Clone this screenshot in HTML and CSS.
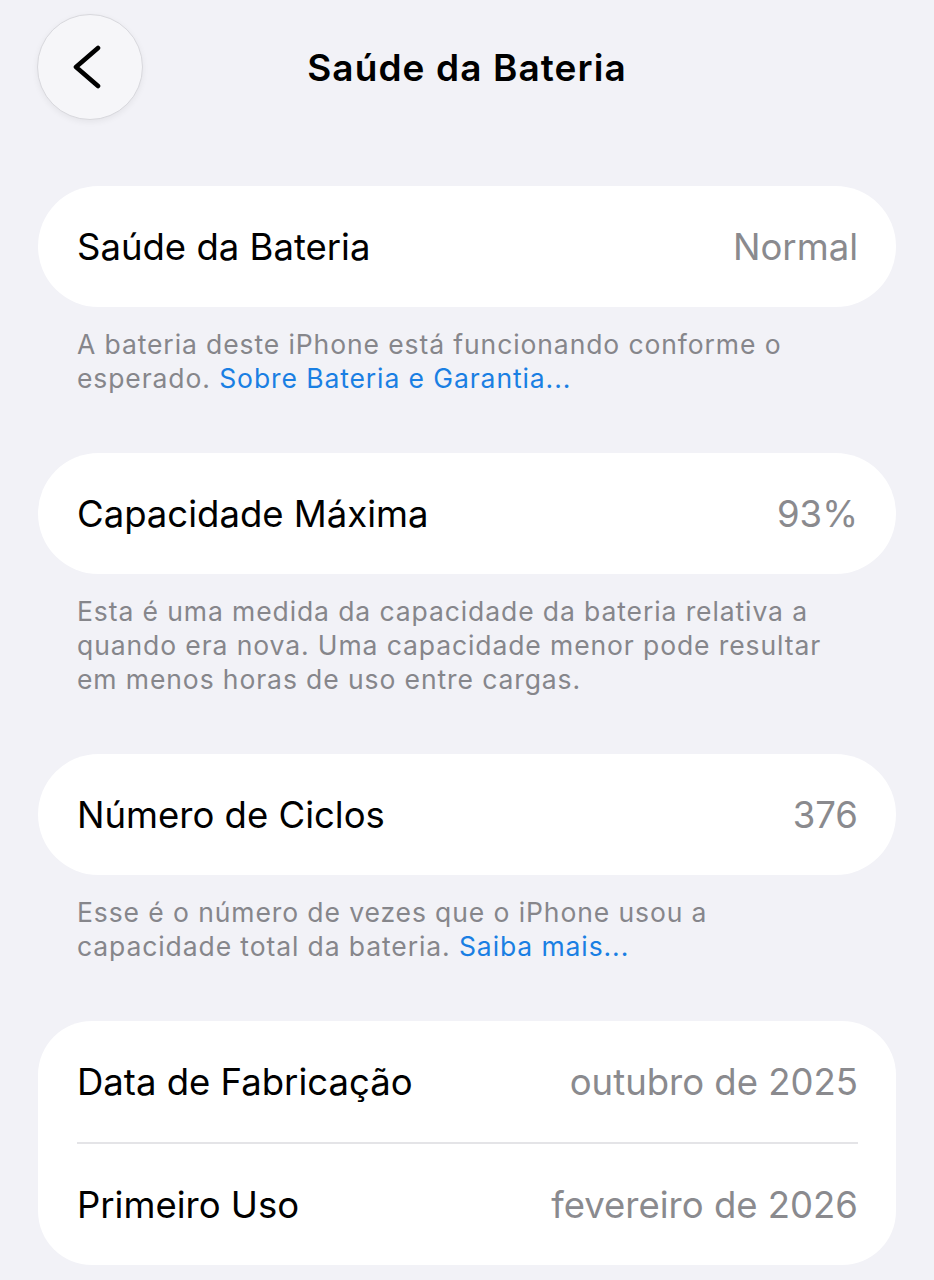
FILE: index.html
```html
<!DOCTYPE html>
<html lang="pt-BR">
<head>
<meta charset="utf-8">
<link rel="stylesheet" href="styles.css">
</head>
<body>
<div class="screen">
  <header class="nav">
    <button class="back" aria-label="Voltar">
      <svg width="30" height="44" viewBox="0 0 30 44"><path d="M26 3 L4 22 L26 41" fill="none" stroke="#000" stroke-width="4.6" stroke-linecap="round" stroke-linejoin="round"/></svg>
    </button>
    <h1 class="title">Saúde da Bateria</h1>
  </header>

  <section class="group">
    <div class="card">
      <div class="row"><span class="label">Saúde da Bateria</span><span class="value">Normal</span></div>
    </div>
    <p class="footer">A bateria deste iPhone está funcionando conforme o esperado. <a class="link">Sobre Bateria e Garantia...</a></p>
  </section>

  <section class="group">
    <div class="card">
      <div class="row"><span class="label">Capacidade Máxima</span><span class="value">93%</span></div>
    </div>
    <p class="footer">Esta é uma medida da capacidade da bateria relativa a quando era nova. Uma capacidade menor pode resultar em menos horas de uso entre cargas.</p>
  </section>

  <section class="group">
    <div class="card">
      <div class="row"><span class="label">Número de Ciclos</span><span class="value">376</span></div>
    </div>
    <p class="footer">Esse é o número de vezes que o iPhone usou a capacidade total da bateria. <a class="link">Saiba mais...</a></p>
  </section>

  <section class="group">
    <div class="card card-multi">
      <div class="row"><span class="label">Data de Fabricação</span><span class="value">outubro de 2025</span></div>
      <div class="sep"></div>
      <div class="row"><span class="label">Primeiro Uso</span><span class="value">fevereiro de 2026</span></div>
    </div>
  </section>
</div>
</body>
</html>
```
FILE: styles.css
```css
* { box-sizing: border-box; }
html, body {
  margin: 0;
  padding: 0;
  background: #f2f2f7;
}
body {
  font-family: Inter, "Noto Sans", "Liberation Sans", sans-serif;
  color: #000;
  -webkit-font-smoothing: antialiased;
}
.screen {
  width: 934px;
  height: 1280px;
  overflow: hidden;
  padding: 0 38px;
}
.nav {
  position: relative;
  height: 186px;
  display: flex;
  justify-content: center;
}
.back {
  position: absolute;
  left: -1px;
  top: 14px;
  width: 106px;
  height: 106px;
  border-radius: 50%;
  background: #f6f6f9;
  border: 1px solid #d8d8dd;
  box-shadow: 0 2px 6px rgba(0,0,0,0.06);
  display: flex;
  align-items: center;
  justify-content: center;
  padding: 0 6px 0 0;
  cursor: pointer;
}
.title {
  margin: 0;
  margin-top: 44px;
  font-size: 37px;
  font-weight: 600;
  letter-spacing: 1.1px;
  line-height: 48px;
  height: 48px;
}
.group {
  margin-bottom: 58px;
}
.card {
  background: #fff;
  border-radius: 61px;
}
.card-multi {
  border-radius: 54px;
}
.row {
  height: 121px;
  display: flex;
  align-items: center;
  justify-content: space-between;
  padding: 0 38px 0 39px;
  font-size: 36.5px;
  letter-spacing: 0;
}
.value {
  color: #8a8a8e;
}
.sep {
  height: 2px;
  background: #e4e4e7;
  margin: 0 38px 0 39px;
}
.footer {
  margin: 20px 0 0;
  padding: 0 59px 0 39px;
  font-size: 26.5px;
  line-height: 34px;
  color: #86868b;
  letter-spacing: 0.9px;
}
.link {
  color: #1a7fe3;
  text-decoration: none;
}
```
